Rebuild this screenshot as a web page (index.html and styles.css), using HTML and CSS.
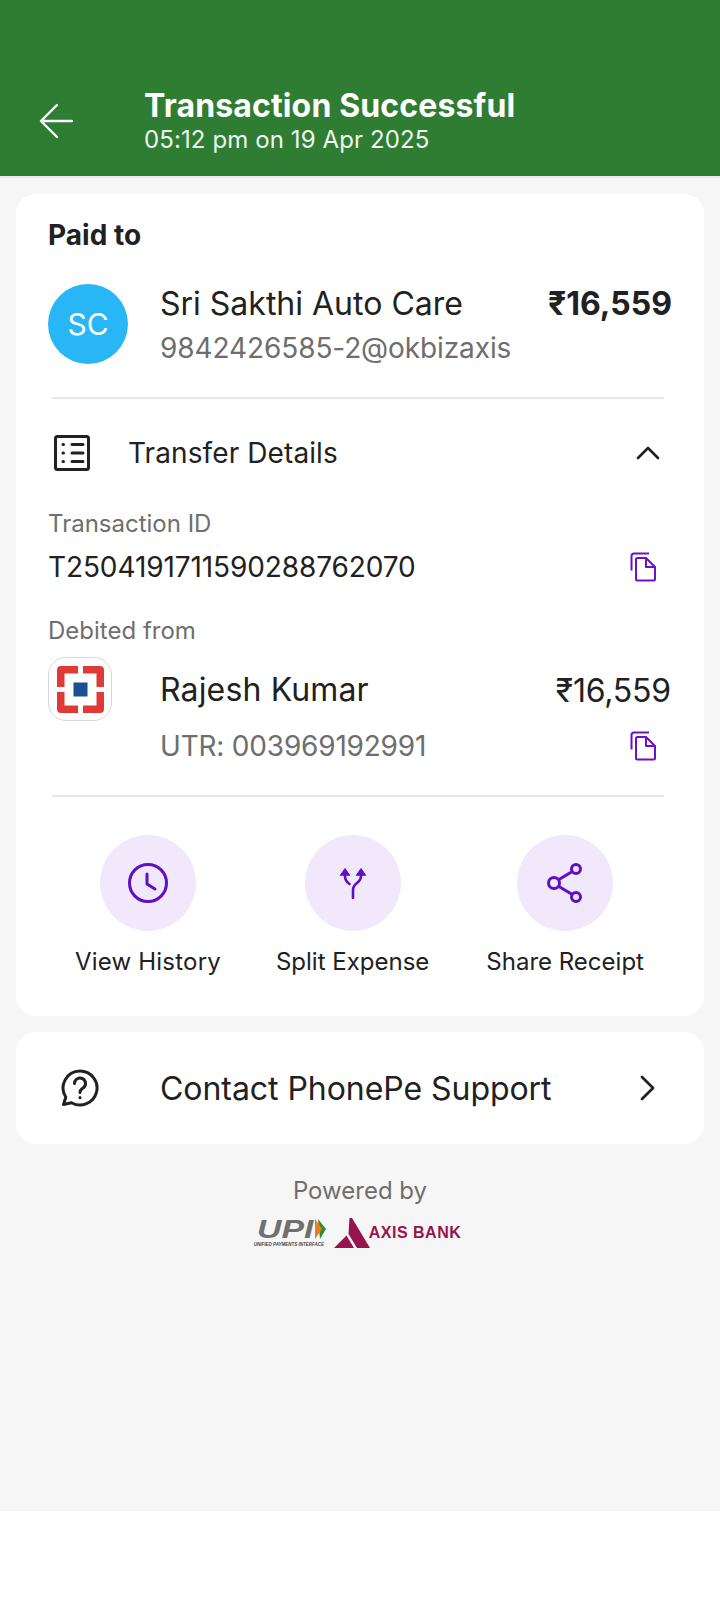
FILE: index.html
```html
<!DOCTYPE html>
<html lang="en">
<head>
    <meta charset="UTF-8">
    <meta name="viewport" content="width=device-width, initial-scale=1.0">
    <title>Transaction Successful</title>
    <link rel="stylesheet" href="styles.css">
</head>
<body>

<div class="page">
    <header class="header">
        <svg class="back" width="34" height="36" viewBox="0 0 34 36" fill="none" stroke="#fff" stroke-width="2.4" stroke-linecap="round" stroke-linejoin="round">
            <path d="M3 18H33M18 2 2 18l16 16"/>
        </svg>
        <div>
            <div class="header-title">Transaction Successful</div>
            <div class="header-sub">05:12 pm on 19 Apr 2025</div>
        </div>
    </header>

    <section class="card main-card">
        <div class="paid-label">Paid to</div>
        <div class="paid-row">
            <div class="avatar">SC</div>
            <div class="grow paid-info">
                <div class="row-between">
                    <span class="name">Sri Sakthi Auto Care</span>
                    <span class="amount-bold">₹16,559</span>
                </div>
                <div class="muted-line">9842426585-2@okbizaxis</div>
            </div>
        </div>

        <div class="divider divider-top"></div>

        <div class="transfer-head">
            <svg width="38" height="38" viewBox="0 0 38 38" fill="none" stroke="#212121" stroke-width="3" stroke-linecap="round" stroke-linejoin="round">
                <rect x="2.500" y="2.500" width="33" height="33" rx="2"/>
                <path d="M19 10.500H30M19 19H30M19 27.500H30M10 10.500h.5M10 19h.5M10 27.500h.5"/>
            </svg>
            <span class="transfer-title">Transfer Details</span>
            <svg width="24" height="14" viewBox="0 0 24 14" fill="none" stroke="#212121" stroke-width="2.600" stroke-linecap="round" stroke-linejoin="round">
                <path d="M2 12 12 2l10 10"/>
            </svg>
        </div>

        <div class="small-label txn-label">Transaction ID</div>
        <div class="row-between txn-row">
            <span class="txn-id">T2504191711590288762070</span>
            <svg width="26" height="30" viewBox="0 0 26 30" fill="none" stroke="#6a11cb" stroke-width="2" stroke-linejoin="round">
                <path d="M1.500 18.500V4q0-2.500 2.500-2.500H19"/>
                <path d="M6 7.500q0-1.500 1.500-1.500H16l9 9v12q0 1.500-1.500 1.500h-16Q6 28.500 6 27ZM16 6v9h9"/>
            </svg>
        </div>

        <div class="small-label debit-label">Debited from</div>
        <div class="debit-row">
            <div class="bank-logo">
                <svg width="47" height="47" viewBox="0 0 47 47" fill="#df3a36">
                    <path d="M4 0H21V7.500H7.500V21H0V4Q0 0 4 0ZM26 0H43Q47 0 47 4V21H39.500V7.500H26ZM0 26H7.500V39.500H21V47H4Q0 47 0 43ZM39.500 26H47V43Q47 47 43 47H26V39.500H39.500Z"/>
                    <rect x="16.500" y="16.500" width="14" height="14" fill="#1c4f91"/>
                </svg>
            </div>
            <div class="grow debit-info">
                <div class="row-between">
                    <span class="name name-bank">Rajesh Kumar</span>
                    <span class="amount">₹16,559</span>
                </div>
                <div class="row-between utr-row">
                    <span class="muted-line">UTR: 003969192991</span>
                    <svg width="26" height="30" viewBox="0 0 26 30" fill="none" stroke="#6a11cb" stroke-width="2" stroke-linejoin="round">
                        <path d="M1.500 18.500V4q0-2.500 2.500-2.500H19"/>
                        <path d="M6 7.500q0-1.500 1.500-1.500H16l9 9v12q0 1.500-1.500 1.500h-16Q6 28.500 6 27ZM16 6v9h9"/>
                    </svg>
                </div>
            </div>
        </div>

        <div class="divider divider-bottom"></div>

        <div class="actions">
            <div class="action action-history">
                <div class="action-circle">
                    <svg width="42" height="42" viewBox="0 0 42 42" fill="none" stroke="#5f0fc4" stroke-width="3" stroke-linecap="round" stroke-linejoin="round">
                        <circle cx="21" cy="21" r="18.500"/>
                        <path d="M20 12V22L28 27"/>
                    </svg>
                </div>
                <span>View History</span>
            </div>
            <div class="action action-split">
                <div class="action-circle">
                    <svg width="28" height="32" viewBox="0 0 28 32" fill="none" stroke="#5f0fc4" stroke-width="2.600" stroke-linecap="round" stroke-linejoin="round">
                        <path d="M6 6V9Q6 14 10.500 17"/>
                        <path d="M22 6V9Q22 13 18 16 14 19 14 23V31"/>
                        <path d="M1.500 8 6 1.500 10.500 8ZM17.500 8 22 1.500 26.500 8Z" fill="#5f0fc4" stroke-width="1"/>
                    </svg>
                </div>
                <span>Split Expense</span>
            </div>
            <div class="action action-share">
                <div class="action-circle">
                    <svg width="36" height="40" viewBox="0 0 36 40" fill="none" stroke="#5f0fc4" stroke-width="3">
                        <circle cx="7" cy="20" r="5.500"/>
                        <circle cx="29" cy="6" r="4.500"/>
                        <circle cx="29" cy="34" r="4.500"/>
                        <path d="M11.500 16.800 25.300 8.500M11.500 23.200 25.300 31.500"/>
                    </svg>
                </div>
                <span>Share Receipt</span>
            </div>
        </div>
    </section>

    <section class="card support-card">
        <svg width="38" height="38" viewBox="0 0 38 38" fill="none" stroke="#212121" stroke-width="3" stroke-linecap="round" stroke-linejoin="round">
            <path d="M19 2a17 17 0 1 1-8.500 31.700L2.500 35.500l2.300-7.300A17 17 0 0 1 19 2Z"/>
            <path d="M13.500 14.500a5.500 5.500 0 1 1 8.500 4.600c-2 1.300-3 2.200-3 4.400"/>
            <path d="M19 28.500v.3"/>
        </svg>
        <span class="support-text">Contact PhonePe Support</span>
        <svg width="16" height="26" viewBox="0 0 16 26" fill="none" stroke="#212121" stroke-width="2.800" stroke-linecap="round" stroke-linejoin="round">
            <path d="M3 2l11 11L3 24"/>
        </svg>
    </section>

    <div class="powered">
        <div class="powered-text">Powered by</div>
        <div class="logos">
            <div class="upi">
                <div class="upi-main">
                    <span class="upi-word">UPI</span>
                    <svg width="12" height="20" viewBox="0 0 12 20">
                        <path d="M4 0 12 10 6 20Z" fill="#2f8a3c"/>
                        <path d="M1 0 8 10 1 20Z" fill="#ee7b22"/>
                    </svg>
                </div>
                <div class="upi-small">UNIFIED PAYMENTS INTERFACE</div>
            </div>
            <svg width="36" height="30" viewBox="0 0 36 30" fill="#97144d">
                <path d="M15.500 0H18L36 30H23L14.500 16ZM12.500 17.500 20 30H0Z"/>
            </svg>
            <span class="axis-word">AXIS BANK</span>
        </div>
    </div>
</div>

</body>
</html>
```

FILE: styles.css
```css
* {
    box-sizing: border-box;
}

body {
    font-family: Inter, "Noto Sans", sans-serif;
    background-color: #fff;
    color: #212121;
    margin: 0;
}

.page {
    height: 1511px;
    background-color: #f6f6f6;
    overflow: hidden;
}

.header {
    height: 176px;
    background-color: #2e7d32;
    box-shadow: 0 2px 0 #ebebeb;
    display: flex;
    align-items: flex-end;
    padding: 0 0 21px 39px;
    color: #fff;
}

.back {
    margin-right: 71px;
    margin-bottom: 16px;
}

.header-title {
    font-size: 32px;
    font-weight: 700;
    line-height: 36px;
    letter-spacing: 0.14px;
    margin-bottom: 1px;
}

.header-sub {
    font-size: 24px;
    line-height: 30px;
    letter-spacing: 0.1px;
    color: #f0f5f0;
}

.card {
    background-color: #fff;
    border-radius: 20px;
    margin: 0 16px;
}

.main-card {
    margin-top: 18px;
    height: 822px;
    padding: 25px 32px 0;
}

.paid-label {
    font-size: 28px;
    font-weight: 700;
    line-height: 32px;
}

.paid-row {
    display: flex;
    margin-top: 29px;
    align-items: center;
}

.paid-info {
    padding-top: 4px;
}

.avatar {
    width: 80px;
    height: 80px;
    flex: none;
    border-radius: 50%;
    background-color: #29b6f6;
    color: #fff;
    font-size: 30px;
    display: flex;
    align-items: center;
    justify-content: center;
    margin-right: 32px;
}

.grow {
    flex: 1;
    min-width: 0;
}

.row-between {
    display: flex;
    justify-content: space-between;
    align-items: center;
}

.name {
    font-size: 32px;
    line-height: 40px;
}

.name-bank {
    letter-spacing: 0.15px;
}

.amount-bold {
    font-size: 32px;
    font-weight: 700;
    margin-top: -2px;
}

.amount {
    font-size: 32px;
    letter-spacing: -0.2px;
    margin-right: 1px;
}

.muted-line {
    font-size: 28px;
    line-height: 40px;
    letter-spacing: -0.1px;
    color: #6e6e6e;
    margin-top: 4px;
}

.divider {
    height: 2px;
    background-color: #e8e8e8;
    margin: 0 8px 0 4px;
}

.divider-top {
    margin-top: 29px;
}

.divider-bottom {
    margin-top: 29px;
}

.transfer-head {
    display: flex;
    align-items: center;
    margin-top: 35px;
    padding-right: 12px;
    padding-left: 5px;
}

.transfer-title {
    flex: 1;
    font-size: 28px;
    letter-spacing: 0.1px;
    margin-left: 37px;
}

.small-label {
    font-size: 24px;
    line-height: 30px;
    color: #6e6e6e;
}

.txn-label {
    margin-top: 37px;
}

.txn-row {
    margin-top: 10px;
    height: 36px;
    padding-right: 16px;
}

.txn-id {
    font-size: 28px;
    letter-spacing: -0.1px;
}

.debit-label {
    margin-top: 31px;
}

.debit-row {
    display: flex;
    margin-top: 11px;
}

.debit-info {
    padding-top: 13px;
}

.bank-logo {
    width: 64px;
    height: 64px;
    flex: none;
    border: 1px solid #d8d8d8;
    border-radius: 18px;
    margin-right: 48px;
    display: flex;
    align-items: center;
    justify-content: center;
}

.utr-row {
    margin-top: 16px;
    padding-right: 16px;
}

.utr-row .muted-line {
    margin-top: 0;
    letter-spacing: -0.2px;
}

.actions {
    height: 160px;
    margin-top: 38px;
    display: flex;
    font-size: 24px;
}

.action {
    display: flex;
    flex-direction: column;
    align-items: center;
    gap: 15px;
    line-height: 32px;
    white-space: nowrap;
}

.action-history {
    margin-left: 27px;
    letter-spacing: 0.2px;
}

.action-split {
    margin-left: 55px;
}

.action-share {
    margin-left: 57px;
}

.action-circle {
    width: 96px;
    height: 96px;
    border-radius: 50%;
    background-color: #f1e8fb;
    display: flex;
    align-items: center;
    justify-content: center;
}

.support-card {
    margin-top: 16px;
    height: 112px;
    display: flex;
    align-items: center;
    padding: 0 49px 0 45px;
}

.support-text {
    flex: 1;
    font-size: 32px;
    letter-spacing: -0.05px;
    margin-left: 61px;
}

.powered {
    margin-top: 31px;
    text-align: center;
}

.powered-text {
    font-size: 24px;
    line-height: 32px;
    color: #6e6e6e;
}

.logos {
    display: flex;
    justify-content: center;
    align-items: center;
    gap: 8px;
    margin-top: 10px;
    height: 32px;
    padding-right: 5px;
}

.upi {
    width: 72px;
    font-family: "Liberation Sans", sans-serif;
    line-height: 1;
    text-align: left;
}

.upi-main {
    display: flex;
    align-items: center;
    justify-content: space-between;
    height: 21px;
    padding-left: 3px;
}

.upi-word {
    display: inline-block;
    width: 57px;
    font-size: 26px;
    font-weight: 700;
    font-style: italic;
    color: #707070;
    transform: scaleX(1.3);
    transform-origin: left center;
}

.upi-small {
    font-size: 4.5px;
    font-style: italic;
    font-weight: 700;
    color: #444;
    white-space: nowrap;
    margin-top: 3px;
}

.axis-word {
    font-family: "Liberation Sans", sans-serif;
    font-size: 16px;
    font-weight: 700;
    letter-spacing: 0.5px;
    color: #97144d;
    margin-left: -9px;
}
```
